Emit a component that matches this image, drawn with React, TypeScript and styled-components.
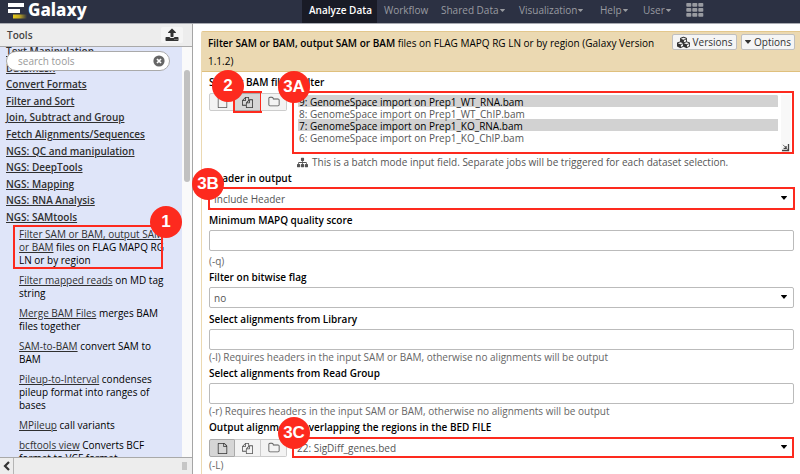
import React from "react";
import styled, { createGlobalStyle, css } from "styled-components";
import { FaCubes } from "react-icons/fa";

const FONT = '"Open Sans", "Noto Sans", sans-serif';
const RED = "#fd2a1e";

const GlobalStyle = createGlobalStyle`
  *, *::before, *::after { box-sizing: border-box; }
  body { margin: 0; background: #fff; color: #000; font: 10px/14px ${FONT}; overflow: hidden; }
  button, input, select { font: inherit; color: inherit; margin: 0; }
`;

const Page = styled.div`
  display: flex;
  flex-direction: column;
  height: 100vh;
  overflow: hidden;
`;

/* ---------- masthead ---------- */

const Masthead = styled.header`
  display: flex;
  flex: none;
  height: 24px;
  background: #2c3143;
  border-bottom: 1px solid #a9abb2;
`;

const Brand = styled.a`
  display: flex;
  align-items: flex-start;
  flex: none;
  width: 302px;
  padding-left: 7px;
  color: #fff;
  font-family: "Noto Sans", "Open Sans", sans-serif;
  font-size: 17px;
  line-height: 20px;
  font-weight: 800;
  text-decoration: none;
  svg { flex: none; margin-right: 1px; }
`;

const Nav = styled.nav`
  display: flex;
`;

const NavItem = styled.a<{ $w: number; $active?: boolean }>`
  display: flex;
  align-items: center;
  gap: 1px;
  width: ${(p) => p.$w}px;
  height: 23px;
  padding: 0 0 3px 7px;
  color: #999ba1;
  text-decoration: none;
  white-space: nowrap;
  ${(p) =>
    p.$active &&
    css`
      color: #fff;
      background: #191b26;
      font-weight: 600;
    `}
`;

/* ---------- layout ---------- */

const Body = styled.div`
  display: flex;
  flex: 1;
  min-height: 0;
`;

const Side = styled.aside`
  display: flex;
  flex-direction: column;
  flex: none;
  width: 193px;
  border-right: 1px solid #a5a5a5;
`;

const SideHead = styled.div`
  display: flex;
  align-items: center;
  justify-content: space-between;
  flex: none;
  height: 23px;
  padding: 0 9px 0 7px;
  background: #ededed;
  border-bottom: 1px solid #a9a9a9;
`;

const SideTitle = styled.h2`
  margin: 0;
  font-size: 10px;
  line-height: 14px;
  font-weight: 600;
  color: #444;
`;

const UploadButton = styled.button`
  display: flex;
  align-items: center;
  justify-content: center;
  width: 22px;
  height: 16px;
  padding: 0;
  border: 0;
  border-radius: 2px;
  background: #f5f5f5;
  color: #333;
`;

const ToolArea = styled.div`
  position: relative;
  display: flex;
  flex: 1;
  min-height: 0;
`;

const ToolScroll = styled.div`
  flex: 1;
  min-width: 0;
  overflow: hidden;
  background: #dfe5f9;
`;

const SearchBox = styled.label`
  position: absolute;
  left: 6px;
  top: 4px;
  z-index: 1;
  display: flex;
  align-items: center;
  width: 164px;
  height: 20px;
  padding: 0 4px 0 11px;
  border: 1px solid #aaa;
  border-radius: 10px;
  background: #fff;
  input {
    flex: 1;
    min-width: 0;
    padding: 0;
    border: 0;
    outline: 0;
    background: transparent;
    &::placeholder { color: #999; opacity: 1; }
  }
`;

const Sections = styled.div`
  display: grid;
  grid-auto-rows: 1fr;
  align-items: center;
  min-height: 182px;
  margin-top: -4px;
  padding-left: 6px;
`;

const SectionLink = styled.a`
  color: #303030;
  font-weight: 600;
  line-height: 14px;
  text-decoration: underline;
  white-space: nowrap;
`;

const ToolList = styled.ul`
  display: flex;
  flex-direction: column;
  gap: 7px;
  margin: 3px 0 0;
  padding: 0 0 0 19px;
  list-style: none;
`;

const Tool = styled.li`
  position: relative;
  line-height: 13px;
  white-space: nowrap;
  a { color: #303030; text-decoration: underline; }
`;

const Scrollbar = styled.div`
  flex: none;
  width: 10px;
  padding: 23px 2px 0;
  background: #fafafa;
`;

const Thumb = styled.div`
  height: 112px;
  border-radius: 3px;
  background: #c1c1c1;
`;

const SideFoot = styled.div`
  display: flex;
  flex: none;
  align-items: stretch;
  justify-content: space-between;
  height: 17px;
  background: #ededed;
  border-top: 1px solid #a9a9a9;
`;

const CollapseButton = styled.button`
  display: flex;
  align-items: center;
  justify-content: center;
  width: 14px;
  padding: 0;
  border: 0;
  border-right: 1px solid #b5b5b5;
  background: transparent;
  color: #333;
`;

const Grip = styled.div`
  align-self: center;
  width: 5px;
  height: 8px;
  margin-right: 5px;
  background: #c6c6c6;
`;

/* ---------- form ---------- */

const Main = styled.main`
  flex: 1;
  min-width: 0;
  padding: 7px 0 0 8px;
`;

const Form = styled.form`
  height: 100%;
  border: 1px solid #e3c78c;
  border-right: 0;
  border-bottom: 0;
  border-left: 1px solid #ebd9b2;
  border-radius: 2px 0 0 0;
`;

const FormHead = styled.div`
  display: flex;
  justify-content: space-between;
  height: 40px;
  padding: 2px 5px 2px 6px;
  background: #ebd9b2;
  border-bottom: 1px solid #dfc07d;
`;

const FormTitle = styled.div`
  line-height: 18px;
  white-space: nowrap;
  b { font-weight: 600; }
`;

const HeadButtons = styled.div`
  display: flex;
  gap: 4px;
`;

const HeadButton = styled.button<{ $w: number }>`
  display: flex;
  align-items: center;
  justify-content: center;
  gap: 3px;
  width: ${(p) => p.$w}px;
  height: 16px;
  padding: 0;
  border: 1px solid #bfbfbf;
  border-radius: 2px;
  background: #f5f5f5;
  color: #333;
`;

const Fields = styled.div`
  display: flex;
  flex-direction: column;
  gap: 4px;
  padding: 3px 6px 0 7px;
`;

const Field = styled.div<{ $gap?: number }>`
  display: flex;
  flex-direction: column;
  gap: ${(p) => p.$gap ?? 3}px;
`;

const Label = styled.label`
  position: relative;
  font-weight: 600;
  line-height: 14px;
`;

const Control = styled.div`
  position: relative;
  display: flex;
  flex: 1 0 auto;
  height: 21px;
  color: #555;
  > svg { position: absolute; right: 7px; top: 8px; color: #000; pointer-events: none; }
`;

const boxed = css`
  width: 100%;
  height: 100%;
  border: 1px solid #bbb;
  border-radius: 2px;
  background: #fff;
  outline: 0;
  padding: 0 4px;
`;

const TextInput = styled.input`
  ${boxed}
`;

const Select = styled.select`
  ${boxed}
  appearance: none;
`;

const Help = styled.div<{ $roomy?: boolean }>`
  margin-top: ${(p) => (p.$roomy ? 1 : -2)}px;
  margin-bottom: -1px;
  color: #666;
  line-height: 12px;
`;

const DataRow = styled.div`
  display: flex;
  align-items: flex-start;
  gap: 5px;
`;

const ModeGroup = styled.div`
  display: flex;
  flex: none;
  margin-top: 2px;
`;

const ModeButton = styled.button<{ $on?: boolean }>`
  position: relative;
  display: flex;
  align-items: center;
  justify-content: center;
  width: 26px;
  height: 18px;
  padding: 0;
  border: 1px solid ${(p) => (p.$on ? "#aaa" : "#ccc")};
  background: ${(p) => (p.$on ? "#d6d6d6" : "#f3f3f3")};
  color: ${(p) => (p.$on ? "#333" : "#555")};
  & + & { border-left: 0; }
  &:first-child { border-radius: 2px 0 0 2px; }
  &:last-child { border-radius: 0 2px 2px 0; }
`;

const ListFrame = styled.div`
  position: relative;
  display: flex;
  flex: 1;
  height: 63px;
  padding: 4px 3px 2px 6px;
`;

const ListBox = styled.select`
  flex: 1;
  min-width: 0;
  padding: 0;
  border: 0;
  outline: 0;
  overflow: hidden;
  color: #555;
  background: transparent;
  option {
    min-height: 12px;
    height: 12px;
    padding: 0 1px;
    line-height: 12px;
    color: #555;
  }
  option:checked {
    color: #000;
    background: #d2d2d2 linear-gradient(#d2d2d2, #d2d2d2);
  }
`;

const ListTrack = styled.div`
  display: flex;
  flex: none;
  align-items: flex-end;
  justify-content: center;
  width: 10px;
  margin-left: 3px;
  background: #f8f8f8;
`;

const BatchNote = styled.div`
  display: flex;
  align-items: center;
  gap: 4px;
  height: 12px;
  margin: 0 0 -1px 88px;
  color: #555;
  line-height: 12px;
  white-space: nowrap;
`;

/* ---------- annotations ---------- */

const Outline = styled.span<{ $spread?: string }>`
  position: absolute;
  inset: ${(p) => p.$spread ?? "0"};
  border: 2px solid ${RED};
  pointer-events: none;
`;

const Badge = styled.span<{ $x: number; $y: number }>`
  position: absolute;
  left: ${(p) => p.$x}px;
  top: ${(p) => p.$y}px;
  z-index: 3;
  width: 32px;
  height: 32px;
  border-radius: 50%;
  background: ${RED};
  color: #fff;
  font: 700 17px/32px "Liberation Sans", Arial, sans-serif;
  text-align: center;
  pointer-events: none;
`;

/* ---------- icons ---------- */

const PATHS = {
  file: "M1468 380q28 28 48 76t20 88v1152q0 40-28 68t-68 28h-1344q-40 0-68-28t-28-68v-1600q0-40 28-68t68-28h896q40 0 88 20t76 48zm-444-244v376h376q-10-29-22-41l-313-313q-12-12-41-22zm384 1528v-1024h-416q-40 0-68-28t-28-68v-416h-768v1536h1280z",
  files:
    "M1696 384q40 0 68 28t28 68v1216q0 40-28 68t-68 28h-960q-40 0-68-28t-28-68v-288h-544q-40 0-68-28t-28-68v-672q0-40 20-88t48-76l408-408q28-28 76-48t88-20h416q40 0 68 28t28 68v328q68-40 128-40h416zm-544 213l-299 299h299v-299zm-640-384l-299 299h299v-299zm196 647l316-316v-416h-384v416q0 40-28 68t-68 28h-416v640h512v-256q0-40 20-88t48-76zm956 804v-1152h-384v416q0 40-28 68t-68 28h-416v640h896z",
  folder:
    "M1600 1312v-704q0-40-28-68t-68-28h-704q-40 0-68-28t-28-68v-64q0-40-28-68t-68-28h-320q-40 0-68 28t-28 68v960q0 40 28 68t68 28h1216q40 0 68-28t28-68zm128-704v704q0 92-66 158t-158 66h-1216q-92 0-158-66t-66-158v-960q0-92 66-158t158-66h320q92 0 158 66t66 158v32h672q92 0 158 66t66 158z",
  sitemap:
    "M1792 1248v320q0 40-28 68t-68 28h-320q-40 0-68-28t-28-68v-320q0-40 28-68t68-28h96v-192h-512v192h96q40 0 68 28t28 68v320q0 40-28 68t-68 28h-320q-40 0-68-28t-28-68v-320q0-40 28-68t68-28h96v-192h-512v192h96q40 0 68 28t28 68v320q0 40-28 68t-68 28h-320q-40 0-68-28t-28-68v-320q0-40 28-68t68-28h96v-192q0-52 38-90t90-38h512v-192h-96q-40 0-68-28t-28-68v-320q0-40 28-68t68-28h320q40 0 68 28t28 68v320q0 40-28 68t-68 28h-96v192h512q52 0 90 38t38 90v192h96q40 0 68 28t28 68z",
  upload:
    "M1344 1472q0-26-19-45t-45-19-45 19-19 45 19 45 45 19 45-19 19-45zm256 0q0-26-19-45t-45-19-45 19-19 45 19 45 45 19 45-19 19-45zm128-224v320q0 40-28 68t-68 28h-1472q-40 0-68-28t-28-68v-320q0-40 28-68t68-28h427q21 56 70.5 92t110.5 36h256q61 0 110.5-36t70.5-92h427q40 0 68 28t28 68zm-325-648q-17 40-59 40h-256v448q0 26-19 45t-45 19h-256q-26 0-45-19t-19-45v-448h-256q-42 0-59-40-17-39 14-69l448-448q18-19 45-19t45 19l448 448q31 30 14 69z",
};

const Icon = ({ name, size }: { name: keyof typeof PATHS; size: number }) => (
  <svg width={size} height={size} viewBox="0 0 1792 1792" fill="currentColor" aria-hidden="true">
    <path d={PATHS[name]} transform={name === "file" ? "translate(128 0)" : undefined} />
  </svg>
);

const Caret = ({ w = 6, h = 4 }: { w?: number; h?: number }) => (
  <svg width={w} height={h} viewBox="0 0 6 4" preserveAspectRatio="none" fill="currentColor" aria-hidden="true">
    <path d="M.4 0h5.2q.6.2.2.7L3.4 3.6q-.4.4-.8 0L.2.7Q-.2.2.4 0z" />
  </svg>
);

const GalaxyLogo = () => (
  <svg width="20" height="20" viewBox="0 0 20 20" aria-hidden="true">
    <defs>
      <linearGradient id="gold" x1="0" x2="1">
        <stop offset="0" stopColor="#e5c81c" />
        <stop offset="0.45" stopColor="#c5ab22" />
        <stop offset="1" stopColor="#2c3143" />
      </linearGradient>
    </defs>
    <path d="M1 3h16v4H1zM1 9h12v4H1z" fill="#fff" />
    <path d="M6 14.5h14v4H6z" fill="url(#gold)" />
  </svg>
);

const GridIcon = () => (
  <svg width="18" height="14" viewBox="0 0 18 14" fill="currentColor" aria-hidden="true">
    {[0, 5, 10].map((y) =>
      [0, 6, 12].map((x) => <rect key={`${x}-${y}`} x={x + 0.3} y={y} width="5" height="3.8" rx="0.8" />)
    )}
  </svg>
);

const ClearIcon = () => (
  <svg width="12" height="12" viewBox="0 0 12 12" aria-hidden="true">
    <circle cx="6" cy="6" r="5.6" fill="#666" />
    <path d="M4 4l4 4M8 4l-4 4" stroke="#fff" strokeWidth="1.7" />
  </svg>
);

const ResizeIcon = () => (
  <svg width="8" height="8" viewBox="0 0 8 8" fill="none" stroke="#444" aria-hidden="true">
    <path d="M6.5 0v6.5H0M4 2v2.3H1.6" strokeWidth="1.3" />
    <path d="M1 .8l5 5" strokeWidth=".8" />
  </svg>
);

const BackIcon = () => (
  <svg width="8" height="10" viewBox="0 0 8 10" fill="none" stroke="currentColor" aria-hidden="true">
    <path d="M6 1L2 5l4 4" strokeWidth="2.2" />
  </svg>
);

/* ---------- data ---------- */

const NAV = [
  { text: "Analyze Data", w: 75, active: true },
  { text: "Workflow", w: 57 },
  { text: "Shared Data", w: 78, menu: true },
  { text: "Visualization", w: 81, menu: true },
  { text: "Help", w: 43, menu: true },
  { text: "User", w: 43, menu: true },
];

const SECTIONS = [
  "Text Manipulation",
  "Datamash",
  "Convert Formats",
  "Filter and Sort",
  "Join, Subtract and Group",
  "Fetch Alignments/Sequences",
  "NGS: QC and manipulation",
  "NGS: DeepTools",
  "NGS: Mapping",
  "NGS: RNA Analysis",
  "NGS: SAMtools",
];

const TOOLS: { link: React.ReactNode; rest: React.ReactNode }[] = [
  { link: <>Filter SAM or BAM, output SAM<br />or BAM</>, rest: <>files on FLAG MAPQ RG<br />LN or by region</> },
  { link: "Filter mapped reads", rest: <>on MD tag<br />string</> },
  { link: "Merge BAM Files", rest: <>merges BAM<br />files together</> },
  { link: "SAM-to-BAM", rest: <>convert SAM to<br />BAM</> },
  { link: "Pileup-to-Interval", rest: <>condenses<br />pileup format into ranges of<br />bases</> },
  { link: "MPileup", rest: "call variants" },
  { link: "bcftools view", rest: <>Converts BCF<br />format to VCF format</> },
];

const Modes = ({ active, marked }: { active: number; marked?: boolean }) => (
  <ModeGroup role="group" aria-label="Dataset selection mode">
    {(["file", "files", "folder"] as const).map((name, i) => (
      <ModeButton key={name} type="button" $on={i === active} aria-label={name} aria-pressed={i === active}>
        <Icon name={name} size={name === "folder" ? 12 : 11} />
        {marked && i === active && (
          <>
            <Outline $spread="-3px -2px" />
            <Badge $x={-23} $y={-24}>2</Badge>
          </>
        )}
      </ModeButton>
    ))}
  </ModeGroup>
);

export default function App() {
  return (
    <Page>
      <GlobalStyle />
      <Masthead>
        <Brand href="#">
          <GalaxyLogo />
          Galaxy
        </Brand>
        <Nav>
          {NAV.map((n) => (
            <NavItem key={n.text} href="#" $w={n.w} $active={n.active}>
              {n.text}
              {n.menu && <Caret w={5} h={3} />}
            </NavItem>
          ))}
          <NavItem href="#" $w={31} aria-label="Apps">
            <GridIcon />
          </NavItem>
        </Nav>
      </Masthead>
      <Body>
        <Side>
          <SideHead>
            <SideTitle>Tools</SideTitle>
            <UploadButton type="button" aria-label="Upload">
              <Icon name="upload" size={14} />
            </UploadButton>
          </SideHead>
          <ToolArea>
            <SearchBox>
              <input type="text" placeholder="search tools" aria-label="search tools" />
              <ClearIcon />
            </SearchBox>
            <ToolScroll>
              <Sections>
                {SECTIONS.map((s) => (
                  <SectionLink key={s} href="#">{s}</SectionLink>
                ))}
              </Sections>
              <ToolList>
                {TOOLS.map((t, i) => (
                  <Tool key={i}>
                    <a href="#">{t.link}</a> {t.rest}
                    {i === 0 && (
                      <>
                        <Outline $spread="-3px 19px -2px -6px" />
                        <Badge $x={131} $y={-22}>1</Badge>
                      </>
                    )}
                  </Tool>
                ))}
              </ToolList>
            </ToolScroll>
            <Scrollbar>
              <Thumb />
            </Scrollbar>
          </ToolArea>
          <SideFoot>
            <CollapseButton type="button" aria-label="Collapse panel">
              <BackIcon />
            </CollapseButton>
            <Grip />
          </SideFoot>
        </Side>
        <Main>
          <Form>
            <FormHead>
              <FormTitle>
                <b>Filter SAM or BAM, output SAM or BAM</b> files on FLAG MAPQ RG LN or by region (Galaxy Version
                <br />
                1.1.2)
              </FormTitle>
              <HeadButtons>
                <HeadButton type="button" $w={65}>
                  <FaCubes size={13} />
                  Versions
                </HeadButton>
                <HeadButton type="button" $w={54}>
                  <Caret />
                  Options
                </HeadButton>
              </HeadButtons>
            </FormHead>
            <Fields>
              <Field $gap={2}>
                <Label htmlFor="bam">SAM or BAM file to filter</Label>
                <DataRow>
                  <Modes active={1} marked />
                  <ListFrame>
                    <ListBox id="bam" multiple size={4} defaultValue={["9", "7"]}>
                      <option value="9">9: GenomeSpace import on Prep1_WT_RNA.bam</option>
                      <option value="8">8: GenomeSpace import on Prep1_WT_ChIP.bam</option>
                      <option value="7">7: GenomeSpace import on Prep1_KO_RNA.bam</option>
                      <option value="6">6: GenomeSpace import on Prep1_KO_ChIP.bam</option>
                    </ListBox>
                    <ListTrack>
                      <ResizeIcon />
                    </ListTrack>
                    <Outline />
                    <Badge $x={-14} $y={-20}>3A</Badge>
                  </ListFrame>
                </DataRow>
                <BatchNote>
                  <Icon name="sitemap" size={11} />
                  This is a batch mode input field. Separate jobs will be triggered for each dataset selection.
                </BatchNote>
              </Field>
              <Field>
                <Label htmlFor="header">Header in output</Label>
                <Control>
                  <Select id="header">
                    <option>Include Header</option>
                  </Select>
                  <Caret />
                  <Outline $spread="-1px" />
                  <Badge $x={-17} $y={-20}>3B</Badge>
                </Control>
              </Field>
              <Field>
                <Label htmlFor="mapq">Minimum MAPQ quality score</Label>
                <Control>
                  <TextInput id="mapq" type="text" />
                </Control>
                <Help $roomy>(-q)</Help>
              </Field>
              <Field>
                <Label htmlFor="flag">Filter on bitwise flag</Label>
                <Control>
                  <Select id="flag">
                    <option>no</option>
                  </Select>
                  <Caret />
                </Control>
              </Field>
              <Field>
                <Label htmlFor="library">Select alignments from Library</Label>
                <Control>
                  <TextInput id="library" type="text" />
                </Control>
                <Help>(-l) Requires headers in the input SAM or BAM, otherwise no alignments will be output</Help>
              </Field>
              <Field>
                <Label htmlFor="group">Select alignments from Read Group</Label>
                <Control>
                  <TextInput id="group" type="text" />
                </Control>
                <Help>(-r) Requires headers in the input SAM or BAM, otherwise no alignments will be output</Help>
              </Field>
              <Field>
                <Label htmlFor="bed">Output alignments overlapping the regions in the BED FILE</Label>
                <DataRow>
                  <Modes active={0} />
                  <Control>
                    <Select id="bed">
                      <option>22: SigDiff_genes.bed</option>
                    </Select>
                    <Caret />
                    <Outline />
                    <Badge $x={-14} $y={-20}>3C</Badge>
                  </Control>
                </DataRow>
                <Help>(-L)</Help>
              </Field>
            </Fields>
          </Form>
        </Main>
      </Body>
    </Page>
  );
}
